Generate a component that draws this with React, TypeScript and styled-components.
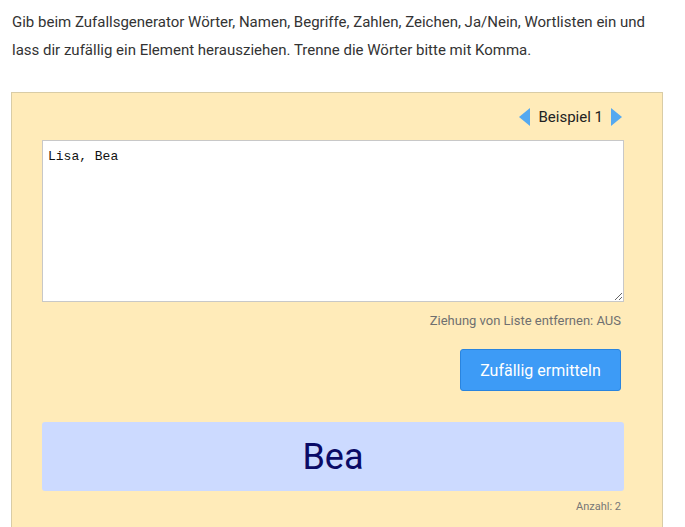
import React from "react";
import styled, { createGlobalStyle } from "styled-components";

const Global = createGlobalStyle`
  html, body { margin: 0; padding: 0; background: #fff; }
  body { font-family: Roboto, "Open Sans", sans-serif; color: #333; }
`;

const Page = styled.div`
  padding: 8px 11px 0 11px;
`;

const Intro = styled.p`
  margin: 0 0 28px 1px;
  font-size: 15px;
  line-height: 28px;
  color: #333;
`;

const Panel = styled.div`
  width: 652px;
  box-sizing: border-box;
  background: #ffebb9;
  border: 1px solid #d9cca6;
  border-bottom: none;
  padding: 12px 39px 18px 30px;
`;

const ExampleNav = styled.div`
  display: flex;
  justify-content: flex-end;
  align-items: center;
  gap: 8px;
  height: 24px;
  margin-bottom: 11px;
  font-size: 15px;
  color: #222;
  padding-right: 1px;
`;

const Arrow = styled.span<{ dir: "left" | "right" }>`
  width: 0;
  height: 0;
  border-top: 9px solid transparent;
  border-bottom: 9px solid transparent;
  ${(p) =>
    p.dir === "left"
      ? "border-right: 11px solid #55a9f0;"
      : "border-left: 11px solid #55a9f0;"}
  cursor: pointer;
`;

const Input = styled.textarea`
  display: block;
  width: 582px;
  height: 162px;
  box-sizing: border-box;
  border: 1px solid #c8c8c8;
  padding: 8px 5px 6px;
  font-family: "Liberation Mono", "Courier New", monospace;
  font-size: 13px;
  color: #111;
  background: #fff;
  resize: vertical;
  outline: none;
`;

const Option = styled.div`
  text-align: right;
  font-size: 13px;
  color: #707070;
  margin-top: 11px;
  padding-right: 2px;
`;

const ActionRow = styled.div`
  display: flex;
  justify-content: flex-end;
  margin-top: 21px;
  padding-right: 2px;
`;

const Button = styled.button`
  width: 161px;
  height: 42px;
  box-sizing: border-box;
  background: #3d9bf6;
  border: 1px solid #2a84de;
  border-radius: 3px;
  color: #fff;
  font-family: Roboto, sans-serif;
  font-size: 16px;
  cursor: pointer;
`;

const Result = styled.div`
  margin-top: 31px;
  width: 582px;
  height: 69px;
  background: #ccdaff;
  border-radius: 3px;
  display: flex;
  align-items: center;
  justify-content: center;
  font-size: 36px;
  color: #0a0a66;
`;

const Count = styled.div`
  text-align: right;
  font-size: 11px;
  color: #777;
  margin-top: 9px;
  padding-right: 2px;
`;

export default function App() {
  return (
    <>
      <Global />
      <Page>
        <Intro>
          Gib beim Zufallsgenerator Wörter, Namen, Begriffe, Zahlen, Zeichen, Ja/Nein, Wortlisten ein und
          lass dir zufällig ein Element herausziehen. Trenne die Wörter bitte mit Komma.
        </Intro>
        <Panel>
          <ExampleNav>
            <Arrow dir="left" />
            <span>Beispiel 1</span>
            <Arrow dir="right" />
          </ExampleNav>
          <Input defaultValue="Lisa, Bea" spellCheck={false} />
          <Option>Ziehung von Liste entfernen: AUS</Option>
          <ActionRow>
            <Button>Zufällig ermitteln</Button>
          </ActionRow>
          <Result>Bea</Result>
          <Count>Anzahl: 2</Count>
        </Panel>
      </Page>
    </>
  );
}
